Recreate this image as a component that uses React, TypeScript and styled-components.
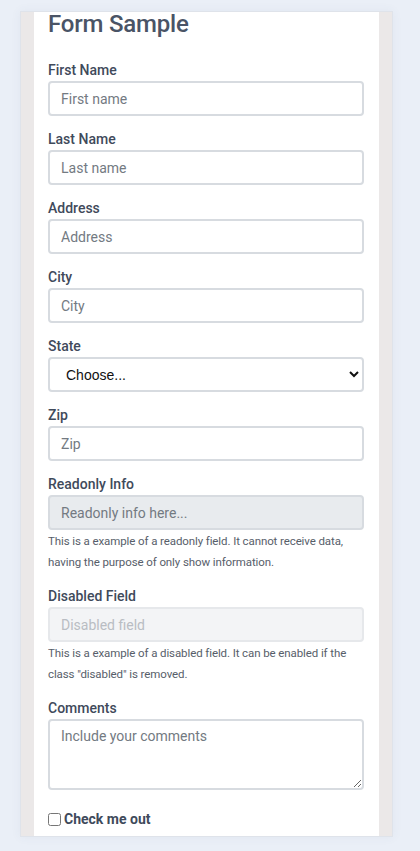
import React from "react";
import styled, { createGlobalStyle } from "styled-components";

const Global = createGlobalStyle`
  html, body { margin: 0; padding: 0; background: #eaeff7; }
  body { font-family: Roboto, "Noto Sans", sans-serif; }
  * { box-sizing: border-box; }
`;

const Page = styled.div`
  padding: 11px 0 15px 20px;
`;

const Card = styled.div`
  width: 373px;
  background: #ebe8e8;
  border: 1px solid #dfe3ea;
  padding: 0 13px;
  box-shadow: 0 0 10px rgba(60, 80, 120, 0.06);
`;

const Panel = styled.form`
  background: #ffffff;
  padding: 0 15px 6px 14px;
  display: flex;
  flex-direction: column;
`;

const Title = styled.h2`
  margin: 0 0 24px;
  font-size: 24px;
  line-height: 24px;
  font-weight: 500;
  color: #4a5466;
  letter-spacing: -0.2px;
`;

const Group = styled.div<{ $gap?: number }>`
  display: flex;
  flex-direction: column;
  margin-bottom: ${(p) => (p.$gap ?? 13)}px;
`;

const Label = styled.label`
  font-size: 14px;
  line-height: 21px;
  font-weight: 500;
  color: #3f4a5b;
`;

const fieldBase = `
  width: 100%;
  height: 35px;
  border: 2px solid #d7dbe0;
  border-radius: 4px;
  padding: 0 11px;
  font-family: Roboto, "Noto Sans", sans-serif;
  font-size: 14px;
  color: #495057;
  background: #fff;
  outline: none;
`;

const Input = styled.input<{ $variant?: "readonly" | "disabled" }>`
  ${fieldBase}
  background: ${(p) =>
    p.$variant === "readonly" ? "#e8ebee" : p.$variant === "disabled" ? "#f3f4f6" : "#fff"};
  border-color: ${(p) => (p.$variant === "disabled" ? "#e6e8eb" : "#d7dbe0")};
  &::placeholder {
    color: ${(p) => (p.$variant === "disabled" ? "#b9bdc3" : "#737a82")};
    opacity: 1;
  }
`;

const Select = styled.select`
  ${fieldBase}
  padding: 0 8px 0 12px;
  font-family: "Liberation Sans", Arial, sans-serif;
  color: #111;
`;

const TextArea = styled.textarea`
  ${fieldBase}
  height: 71px;
  padding: 5px 11px;
  line-height: 1.5;
  &::placeholder {
    color: #737a82;
    opacity: 1;
  }
`;

const Help = styled.small`
  display: block;
  font-size: 11.5px;
  line-height: 21px;
  color: #575e6a;
  letter-spacing: -0.1px;
  margin-top: 1px;
`;

const CheckRow = styled.label`
  display: flex;
  align-items: center;
  gap: 2px;
  margin-top: 6px;
  font-size: 14px;
  line-height: 21px;
  font-weight: 700;
  color: #3f4a5b;
`;

const Check = styled.input`
  width: 13px;
  height: 13px;
  margin: 0 1px 0 0;
`;

export default function App() {
  return (
    <>
      <Global />
      <Page>
        <Card>
          <Panel onSubmit={(e) => e.preventDefault()}>
            <Title>Form Sample</Title>
            <Group>
              <Label>First Name</Label>
              <Input placeholder="First name" />
            </Group>
            <Group>
              <Label>Last Name</Label>
              <Input placeholder="Last name" />
            </Group>
            <Group>
              <Label>Address</Label>
              <Input placeholder="Address" />
            </Group>
            <Group>
              <Label>City</Label>
              <Input placeholder="City" />
            </Group>
            <Group>
              <Label>State</Label>
              <Select defaultValue="">
                <option value="">Choose...</option>
                <option>...</option>
              </Select>
            </Group>
            <Group>
              <Label>Zip</Label>
              <Input placeholder="Zip" />
            </Group>
            <Group>
              <Label>Readonly Info</Label>
              <Input $variant="readonly" readOnly placeholder="Readonly info here..." />
              <Help>
                This is a example of a readonly field. It cannot receive data, having the purpose of
                only show information.
              </Help>
            </Group>
            <Group>
              <Label>Disabled Field</Label>
              <Input $variant="disabled" disabled placeholder="Disabled field" />
              <Help>
                This is a example of a disabled field. It can be enabled if the class "disabled" is
                removed.
              </Help>
            </Group>
            <Group>
              <Label>Comments</Label>
              <TextArea placeholder="Include your comments" />
            </Group>
            <CheckRow>
              <Check type="checkbox" />
              Check me out
            </CheckRow>
          </Panel>
        </Card>
      </Page>
    </>
  );
}
